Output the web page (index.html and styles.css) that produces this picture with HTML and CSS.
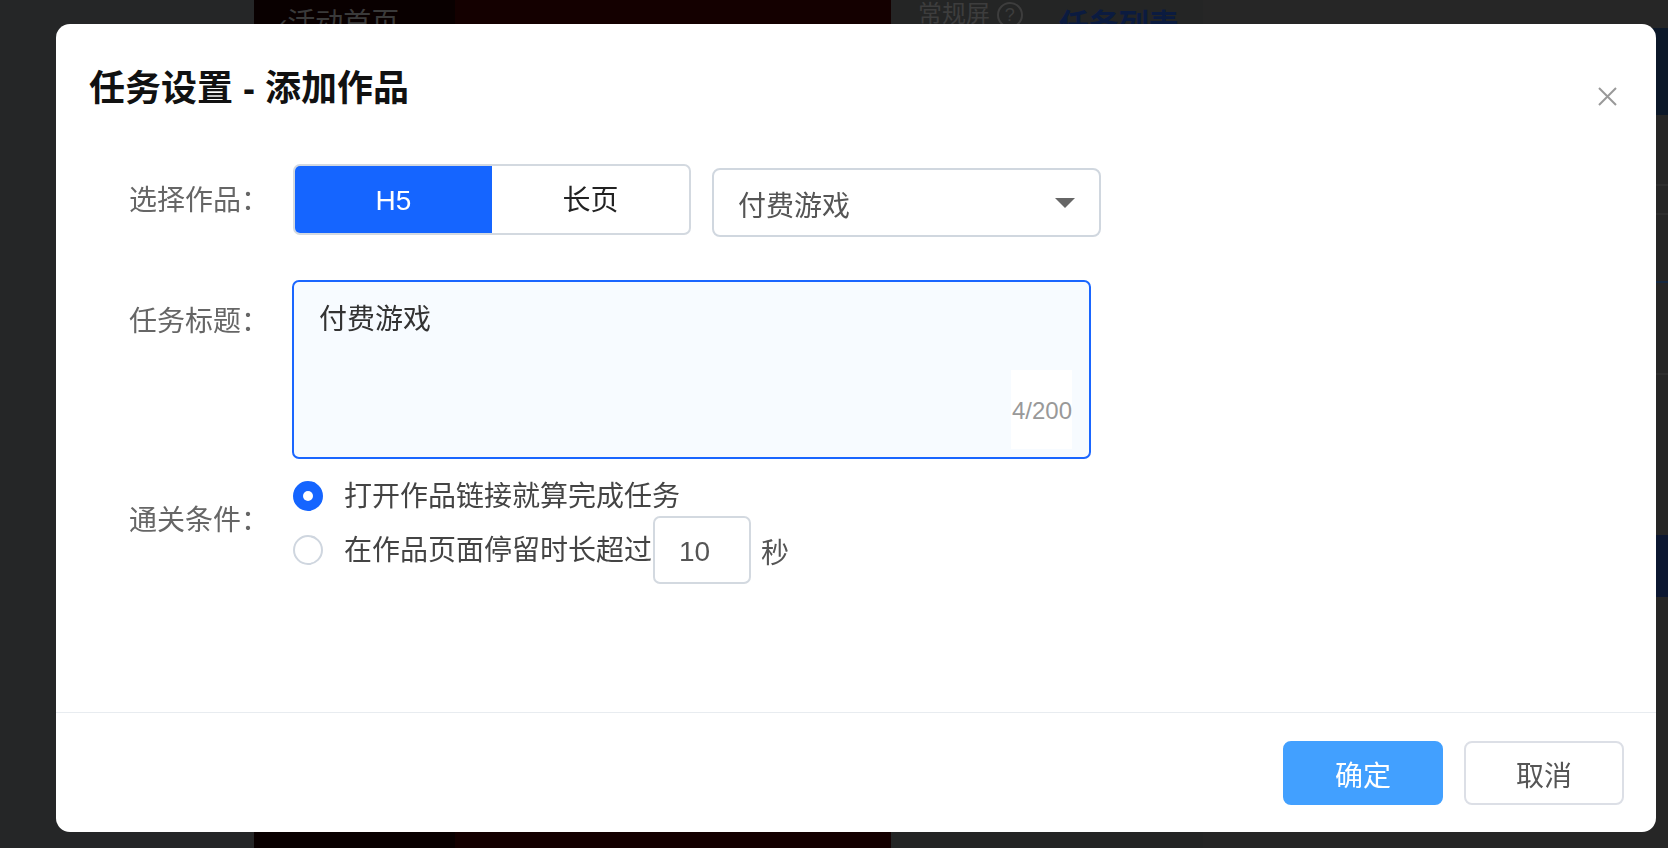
FILE: index.html
```html
<!DOCTYPE html>
<html>
<head>
    <title>任务设置 - 添加作品</title>
    <link rel="stylesheet" href="styles.css">
</head>
<body>
    <!-- page behind the dialog -->
    <div class="page">
        <div class="col col-side"></div>
        <div class="col col-nav">
            <span class="nav-back">‹活动首页</span>
        </div>
        <div class="col col-stage"></div>
        <div class="col col-tools">
            <span class="tools-mode">常规屏 <i class="help">?</i></span>
            <span class="tools-tab">任务列表</span>
        </div>
        <div class="col col-panel">
            <div class="panel-banner"></div>
            <div class="panel-line line-1"></div>
            <div class="panel-line line-2"></div>
            <div class="panel-line line-3"></div>
            <div class="panel-line line-4"></div>
            <div class="panel-add"></div>
        </div>
    </div>

    <div class="mask">
        <div class="dialog">
            <div class="dialog-header">
                <h2 class="dialog-title">任务设置 - 添加作品</h2>
                <button class="dialog-close" aria-label="关闭">
                    <svg width="19" height="19" viewBox="0 0 19 19">
                        <path d="M1 1L18 18M18 1L1 18" stroke="#999" stroke-width="2" fill="none"/>
                    </svg>
                </button>
            </div>

            <div class="dialog-body">
                <div class="form-row">
                    <label class="form-label label-works">选择作品：</label>
                    <div class="segment">
                        <span class="segment-item active">H5</span>
                        <span class="segment-item">长页</span>
                    </div>
                    <div class="select">
                        <span class="select-value">付费游戏</span>
                        <i class="select-arrow"></i>
                    </div>
                </div>

                <div class="form-row row-title">
                    <label class="form-label label-title">任务标题：</label>
                    <div class="textarea-wrap">
                        <textarea class="textarea">付费游戏</textarea>
                        <span class="textarea-count">4/200</span>
                    </div>
                </div>

                <div class="form-row row-pass">
                    <label class="form-label label-pass">通关条件：</label>
                    <div class="radio-group">
                        <div class="radio-option">
                            <span class="radio checked"></span>
                            <span class="radio-text">打开作品链接就算完成任务</span>
                        </div>
                        <div class="radio-option">
                            <span class="radio"></span>
                            <span class="radio-text">在作品页面停留时长超过</span>
                            <input type="text" class="seconds-input" value="10">
                            <span class="seconds-unit">秒</span>
                        </div>
                    </div>
                </div>
            </div>

            <div class="dialog-footer">
                <button class="btn btn-primary">确定</button>
                <button class="btn">取消</button>
            </div>
        </div>
    </div>
</body>
</html>
```

FILE: styles.css
```css
body {
    margin: 0;
    font-family: "Liberation Sans", "Noto Sans CJK SC", sans-serif;
    background-color: #252627;
    overflow: hidden;
}

/* background page (already dimmed by the mask) */
.page {
    display: flex;
    height: 848px;
}

.col {
    height: 100%;
}

.col-side {
    width: 254px;
    background-color: #252627;
}

.col-nav {
    width: 201px;
    background-color: #090000;
    box-sizing: border-box;
    padding: 6px 0 0 24px;
}

.nav-back {
    font-size: 28px;
    line-height: 36px;
    color: #3a3a3a;
}

.col-stage {
    width: 436px;
    background-color: #140000;
}

.col-tools {
    width: 312px;
    background-color: #242525;
    box-sizing: border-box;
    padding: 2px 0 0 27px;
    display: flex;
    align-items: flex-start;
    gap: 36px;
}

.tools-mode {
    font-size: 24px;
    line-height: 24px;
    color: #3d3d3d;
}

.help {
    display: inline-block;
    width: 22px;
    height: 22px;
    border: 2px solid #3d3d3d;
    border-radius: 50%;
    font-style: normal;
    font-size: 18px;
    line-height: 22px;
    text-align: center;
    vertical-align: top;
}

.tools-tab {
    font-size: 30px;
    font-weight: bold;
    line-height: 46px;
    color: #0b1b40;
}

.col-panel {
    flex: 1;
    background-color: #262626;
    display: flex;
    flex-direction: column;
}

.panel-banner {
    margin-top: 28px;
    height: 87px;
    background-color: #0c1829;
}

.panel-line {
    height: 2px;
    background-color: #2e2e2e;
}

.line-1 {
    margin-top: 69px;
}

.line-2 {
    margin-top: 27px;
}

.line-3 {
    margin-top: 66px;
    background-color: #16283f;
}

.line-4 {
    margin-top: 90px;
}

.panel-add {
    margin-top: 160px;
    height: 62px;
    background-color: #0c1731;
}

/* dialog */
.mask {
    position: fixed;
    top: 0;
    left: 0;
    right: 0;
    bottom: 0;
    padding: 24px 0 0 56px;
}

.dialog {
    width: 1600px;
    height: 808px;
    background-color: #fff;
    border-radius: 14px;
    display: flex;
    flex-direction: column;
}

.dialog-header {
    display: flex;
    justify-content: space-between;
    align-items: flex-start;
    padding: 41px 39px 0 33px;
}

.dialog-title {
    margin: 0;
    font-size: 36px;
    line-height: 48px;
    font-weight: 600;
    color: #111;
}

.dialog-close {
    margin-top: 22px;
    padding: 0;
    border: none;
    background: none;
    width: 19px;
    height: 19px;
    cursor: pointer;
}

.dialog-close svg {
    display: block;
}

.dialog-body {
    flex: 1;
    padding: 51px 0 0 73px;
}

.form-row {
    display: flex;
    align-items: flex-start;
}

.form-label {
    width: 164px;
    flex-shrink: 0;
    font-size: 28px;
    color: #666;
}

.label-works {
    padding-top: 3px;
    line-height: 68px;
}

.label-title {
    line-height: 40px;
    margin-top: 22px;
}

.label-pass {
    line-height: 40px;
    margin-top: 25px;
}

.segment {
    display: flex;
    width: 398px;
    height: 71px;
    box-sizing: border-box;
    border: 2px solid #d3d9e0;
    border-radius: 7px;
    overflow: hidden;
}

.segment-item {
    flex: 1;
    text-align: center;
    font-size: 28px;
    padding-top: 3px;
    line-height: 64px;
    color: #222;
}

.segment-item.active {
    background-color: #1565ff;
    color: #fff;
}

.select {
    margin: 4px 0 0 21px;
    width: 389px;
    height: 69px;
    box-sizing: border-box;
    border: 2px solid #d0d7df;
    border-radius: 8px;
    padding: 3px 24px 0;
    display: flex;
    align-items: center;
    justify-content: space-between;
}

.select-value {
    font-size: 28px;
    color: #555;
}

.select-arrow {
    width: 0;
    height: 0;
    border-left: 10px solid transparent;
    border-right: 10px solid transparent;
    border-top: 10px solid #666;
    margin-top: -2px;
}

.row-title {
    margin-top: 43px;
}

.textarea-wrap {
    position: relative;
    width: 799px;
    height: 179px;
    margin-left: -1px;
}

.textarea {
    display: block;
    width: 100%;
    height: 100%;
    box-sizing: border-box;
    border: 2px solid #1a66ff;
    border-radius: 7px;
    background-color: #f7fbff;
    padding: 18px 25px 14px;
    font-family: "Liberation Sans", "Noto Sans CJK SC", sans-serif;
    font-size: 28px;
    line-height: 40px;
    color: #333;
    resize: none;
    outline: none;
}

.textarea-count {
    position: absolute;
    right: 19px;
    bottom: 10px;
    width: 61px;
    height: 79px;
    background-color: #fff;
    font-size: 24px;
    line-height: 81px;
    text-align: right;
    color: #999;
}

.row-pass {
    margin-top: 17px;
}

.radio-group {
    display: flex;
    flex-direction: column;
}

.radio-option {
    display: flex;
    align-items: center;
    min-height: 40px;
}

.radio {
    width: 30px;
    height: 30px;
    box-sizing: border-box;
    border: 2px solid #cfd6df;
    border-radius: 50%;
    background-color: #fff;
    margin-right: 21px;
    display: flex;
    align-items: center;
    justify-content: center;
}

.radio.checked {
    border-color: #1565ff;
    background-color: #1565ff;
}

.radio.checked::after {
    content: "";
    width: 10px;
    height: 10px;
    border-radius: 50%;
    background-color: #fff;
}

.radio-text {
    font-size: 28px;
    padding-top: 2px;
    line-height: 38px;
    color: #444;
}

.seconds-input {
    margin-left: 1px;
    width: 98px;
    height: 68px;
    box-sizing: border-box;
    border: 2px solid #d3d9e0;
    border-radius: 7px;
    padding: 3px 0 0 24px;
    font-family: "Liberation Sans", "Noto Sans CJK SC", sans-serif;
    font-size: 28px;
    color: #555;
    outline: none;
}

.seconds-unit {
    margin-left: 10px;
    padding-top: 2px;
    font-size: 28px;
    color: #555;
}

.dialog-footer {
    border-top: 1px solid #e8ecf0;
    padding: 28px 32px 27px;
    display: flex;
    justify-content: flex-end;
    gap: 21px;
}

.btn {
    width: 160px;
    height: 64px;
    box-sizing: border-box;
    border: 2px solid #dcdfe6;
    border-radius: 8px;
    background-color: #fff;
    font-family: "Liberation Sans", "Noto Sans CJK SC", sans-serif;
    font-size: 28px;
    padding-top: 2px;
    color: #555;
    cursor: pointer;
}

.btn-primary {
    border-color: #42a0ff;
    background-color: #42a0ff;
    color: #fff;
}
```
